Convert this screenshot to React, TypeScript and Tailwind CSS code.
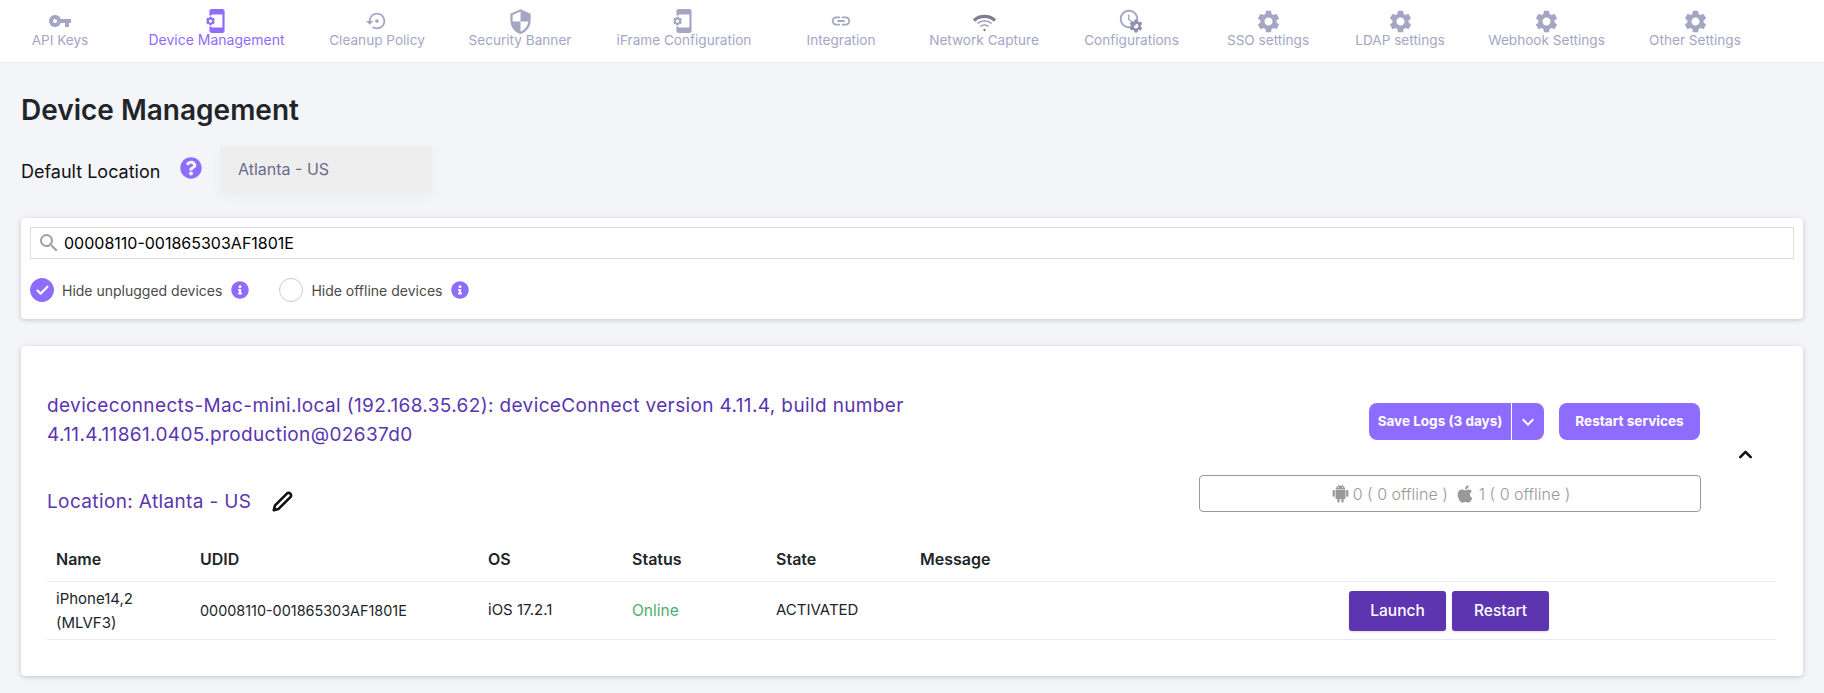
import type { ReactNode } from 'react';
import {
  MdVpnKey,
  MdAppSettingsAlt,
  MdSettingsBackupRestore,
  MdSecurity,
  MdLink,
  MdAccessTime,
  MdSettings,
  MdSearch,
  MdKeyboardArrowDown,
} from 'react-icons/md';
import { AiFillAndroid } from 'react-icons/ai';
import { FaApple, FaInfoCircle, FaQuestionCircle } from 'react-icons/fa';
import { FiEdit2 } from 'react-icons/fi';
import { Check, ChevronUp } from 'lucide-react';

type NavItem = { label: string; width: string; active?: boolean; icon: ReactNode };

const gear = <MdSettings className="text-[27px] text-[#a5a6c4]" />;

const WifiIcon = () => (
  <svg width="23" height="18" viewBox="0 0 23 18" fill="none" className="mt-[3px]">
    <path d="M1 6.5C6.5 1 16.5 1 22 6.5" stroke="#7d7e96" strokeWidth="3.2" />
    <path d="M4.5 9.5C8.5 6 14.5 6 18.5 9.5" stroke="#8b8ca4" strokeWidth="1.4" />
    <path d="M7.5 12.5C10 10.5 13 10.5 15.5 12.5" stroke="#8b8ca4" strokeWidth="1.4" />
    <circle cx="11.5" cy="16" r="1.2" fill="#7d7e96" />
  </svg>
);

const navItems: NavItem[] = [
  { label: 'API Keys', width: 'w-[120px]', icon: <MdVpnKey className="text-[24px] text-[#a5a6c4]" /> },
  {
    label: 'Device Management',
    width: 'w-[193px]',
    active: true,
    icon: <MdAppSettingsAlt className="-scale-x-100 text-[26px] text-[#8e6cff]" />,
  },
  { label: 'Cleanup Policy', width: 'w-[128px]', icon: <MdSettingsBackupRestore className="text-[22px] text-[#a5a6c4]" /> },
  { label: 'Security Banner', width: 'w-[158px]', icon: <MdSecurity className="text-[27px] text-[#a5a6c4]" /> },
  {
    label: 'iFrame Configuration',
    width: 'w-[170px]',
    icon: <MdAppSettingsAlt className="-scale-x-100 text-[26px] text-[#a5a6c4]" />,
  },
  { label: 'Integration', width: 'w-[144px]', icon: <MdLink className="text-[22px] text-[#a5a6c4]" /> },
  { label: 'Network Capture', width: 'w-[142px]', icon: <WifiIcon /> },
  {
    label: 'Configurations',
    width: 'w-[153px]',
    icon: (
      <span className="relative block h-[24px] w-[27px]">
        <MdAccessTime className="absolute left-[0px] -top-[1px] text-[22px] text-[#a5a6c4]" />
        <MdSettings className="absolute left-[10px] top-[9px] text-[16px] text-[#8e8fae]" />
      </span>
    ),
  },
  { label: 'SSO settings', width: 'w-[120px]', icon: gear },
  { label: 'LDAP settings', width: 'w-[144px]', icon: gear },
  { label: 'Webhook Settings', width: 'w-[149px]', icon: gear },
  { label: 'Other Settings', width: 'w-[148px]', icon: gear },
];

const Nav = () => (
  <nav className="flex h-[63px] border-b border-[#ebebef] bg-white">
    {navItems.map((item) => (
      <div key={item.label} className={`${item.width} flex shrink-0 flex-col items-center pt-[9px]`}>
        <div className="flex h-[24px] items-center justify-center">{item.icon}</div>
        <span
          className={`-mt-[2px] whitespace-nowrap leading-[18px] ${
            item.active ? 'text-[14px] text-[#8e6cff]' : 'text-[13.6px] text-[#a5a6c4]'
          }`}
        >
          {item.label}
        </span>
      </div>
    ))}
  </nav>
);

const Toggle = ({ label, checked }: { label: string; checked?: boolean }) => (
  <div className="flex items-center">
    <span
      className={`flex h-6 w-6 items-center justify-center rounded-full border ${
        checked ? 'border-[#8e6cff] bg-[#8e6cff]' : 'border-[#c9c9dc] bg-white'
      }`}
    >
      {checked && <Check size={15} strokeWidth={3.5} className="text-white" />}
    </span>
    <span className="ml-2 text-[14px] text-[#4a4a4a]">{label}</span>
    <FaInfoCircle className="ml-[9px] text-[18px] text-[#8e6cff]" />
  </div>
);

const headers = ['Name', 'UDID', 'OS', 'Status', 'State', 'Message', ''];

const App = () => {
  return (
    <div className="min-h-[693px] w-full overflow-hidden bg-[#f4f5f9] font-['Inter',sans-serif]">
      <Nav />

      <div className="px-[21px]">
        <h1 className="mt-[30px] text-[28px] font-semibold leading-[34px] text-[#212529]">Device Management</h1>

        <div className="mt-[19px] flex items-start">
          <span className="mt-[13px] w-[159px] text-[18px] leading-[26px] text-[#111]">Default Location</span>
          <FaQuestionCircle className="mt-[11px] text-[22px] text-[#8e6cff]" />
          <div className="ml-[18px] flex h-[46px] w-[212px] items-center rounded bg-[#eeeeee] pl-[18px] text-[16px] text-[#6b6c8a] shadow-[0_4px_12px_rgba(0,0,0,0.04)]">
            Atlanta - US
          </div>
        </div>

        <section className="mt-[26px] h-[101px] rounded-sm bg-white px-[9px] pt-[9px] shadow-[0_1px_5px_rgba(0,0,0,0.2)]">
          <div className="flex h-[32px] items-center border border-[#dcdcdc] pl-[6px]">
            <MdSearch className="text-[24px] text-[#a0a0a0]" />
            <span className="ml-[3px] text-[16px] text-black">00008110-001865303AF1801E</span>
          </div>
          <div className="mt-[19px] flex gap-[30px]">
            <Toggle label="Hide unplugged devices" checked />
            <Toggle label="Hide offline devices" />
          </div>
        </section>

        <section className="mt-[27px] h-[330px] rounded-sm bg-white pl-[26px] pr-[26px] pt-[45px] shadow-[0_1px_5px_rgba(0,0,0,0.2)]">
          <div className="flex">
            <div className="flex-1">
              <p className="text-[19px] leading-[29px] tracking-[0.37px] text-[#5a35b0]">
                deviceconnects-Mac-mini.local (192.168.35.62): deviceConnect version 4.11.4, build number
                <br />
                4.11.4.11861.0405.production@02637d0
              </p>
              <div className="mt-[38px] flex items-center">
                <span className="w-[225px] text-[19px] leading-[29px] tracking-[0.37px] text-[#5a35b0]">Location: Atlanta - US</span>
                <FiEdit2 className="text-[21px] text-[#111]" strokeWidth={3} />
              </div>
            </div>

            <div className="w-[502px] pt-[12px]">
              <div className="flex justify-end gap-[15px] pr-[1px]">
                <div className="flex h-[37px] w-[175px] items-center rounded-lg bg-[#8e6cff] text-[13.5px] font-bold text-white">
                  <span className="w-[143px] whitespace-nowrap border-r border-white text-center leading-[37px]">Save Logs (3 days)</span>
                  <MdKeyboardArrowDown className="ml-[4px] text-[24px]" />
                </div>
                <div className="flex h-[37px] w-[141px] items-center justify-center whitespace-nowrap rounded-lg bg-[#8e6cff] text-[13.6px] font-bold text-white">
                  Restart services
                </div>
              </div>
              <div className="mt-[35px] flex h-[37px] items-center justify-center rounded border border-[#999999] text-[16px] font-light text-[#999999]">
                <AiFillAndroid className="mr-[2px] text-[21px]" />
                0 ( 0 offline )
                <FaApple className="ml-[7px] mr-[4px] text-[20px]" />
                1 ( 0 offline )
              </div>
            </div>

            <div className="w-[76px] pl-[34px] pt-[53px]">
              <ChevronUp size={21} strokeWidth={3} className="text-[#111]" />
            </div>
          </div>

          <div className="mr-[1px] mt-[22px] grid grid-cols-[144px_288px_144px_144px_144px_429px_1fr] border-b border-[#ebebef] text-[15px]">
            {headers.map((h) => (
              <div key={h} className="flex h-[44px] items-center border-b border-[#ebebef] px-[9px] pb-[2px] text-[16px] font-semibold text-[#212529]">
                {h}
              </div>
            ))}
            <div className="flex h-[57px] items-center px-[9px] leading-[24px] text-[#212529]">
              <span>
                iPhone14,2
                <br />
                (MLVF3)
              </span>
            </div>
            <div className="flex h-[57px] items-center px-[9px] text-[14.4px] text-[#212529]">00008110-001865303AF1801E</div>
            <div className="flex h-[57px] items-center px-[9px] text-[#212529]">iOS 17.2.1</div>
            <div className="flex h-[57px] items-center px-[9px] text-[15.5px] text-[#4caf6e]">Online</div>
            <div className="flex h-[57px] items-center px-[9px] text-[#212529]">ACTIVATED</div>
            <div className="h-[57px]" />
            <div className="flex h-[57px] items-center gap-[6px] px-[9px]">
              <button className="h-[40px] w-[97px] rounded-[3px] bg-[#5e35b1] text-[15.5px] font-medium text-white shadow-sm">Launch</button>
              <button className="h-[40px] w-[97px] rounded-[3px] bg-[#5e35b1] text-[15.5px] font-medium text-white shadow-sm">Restart</button>
            </div>
          </div>
        </section>
      </div>
    </div>
  );
};

export default App;
